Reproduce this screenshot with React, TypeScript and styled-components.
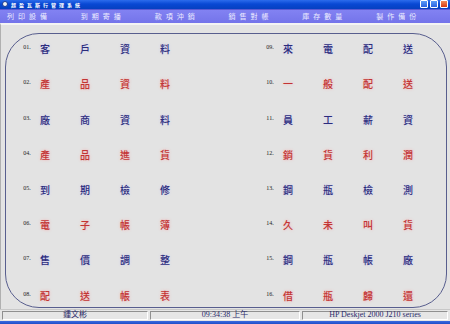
import styled, { createGlobalStyle } from 'styled-components'

const GlobalStyle = createGlobalStyle`
  html, body {
    margin: 0;
    padding: 0;
    background: #e3e3e3;
  }
  * {
    box-sizing: border-box;
  }
`

const cjk = `"Noto Sans CJK TC", "Noto Sans CJK SC", sans-serif`

const menus = ['列印設備', '到期寄播', '款項沖銷', '銷售對帳', '庫存數量', '製作備份']

const items = [
  '客戶資料',
  '產品資料',
  '廠商資料',
  '產品進貨',
  '到期檢修',
  '電子帳簿',
  '售價調整',
  '配送帳表',
  '來電配送',
  '一般配送',
  '員工薪資',
  '銷貨利潤',
  '鋼瓶檢測',
  '久未叫貨',
  '鋼瓶帳廠',
  '借瓶歸還',
]

const Window = styled.div`
  width: 450px;
  height: 324px;
  display: flex;
  flex-direction: column;
  background: #e3e3e3;
  overflow: hidden;
`

const TitleBar = styled.div`
  height: 10px;
  display: flex;
  align-items: center;
  padding: 0 2px;
  background: linear-gradient(#2c6cec, #0848d4 45%, #0640c0);
`

const AppIcon = styled.div`
  width: 6px;
  height: 6px;
  border-radius: 50%;
  background: #f4f4f4;
  border: 1px solid #1a3a90;
  margin-right: 3px;
`

const Title = styled.span`
  font-family: ${cjk};
  font-size: 5px;
  line-height: 1;
  color: #ffffff;
  letter-spacing: 3px;
  font-weight: 700;
  flex: 1;
`

const WinButton = styled.div<{ $close?: boolean }>`
  width: 8px;
  height: 8px;
  margin-left: 2px;
  border: 1px solid #ffffff;
  border-radius: 1px;
  background: ${(p) => (p.$close ? 'linear-gradient(#f08a5a, #d83a10)' : 'linear-gradient(#5a9af8, #2a62e0)')};
`

const MenuBar = styled.div`
  height: 17px;
  display: flex;
  align-items: center;
  padding-left: 7px;
  background: linear-gradient(#8282f2, #7474ea);
  border-top: 1px solid #5a5ad4;
`

const MenuItem = styled.div`
  width: 80px;
  font-family: ${cjk};
  font-size: 7px;
  line-height: 1;
  letter-spacing: 4px;
  color: #ececff;
`

const Client = styled.div`
  flex: 1;
  display: flex;
  flex-direction: column;
  border-top: 2px solid #f4f4f4;
  border-left: 1px solid #b0b0b0;
  padding: 8px 3px 1px 4px;
`

const Panel = styled.div`
  flex: 1;
  border: 1.5px solid #585e8e;
  border-radius: 34px;
  padding: 4px 0 0 16px;
  display: grid;
  grid-auto-flow: column;
  grid-template-columns: 243px 1fr;
  grid-template-rows: repeat(8, 22px);
  row-gap: 13.2px;
`

const Row = styled.div`
  display: flex;
  align-items: center;
`

const Num = styled.span`
  width: 10px;
  margin-right: 7px;
  font-family: 'Liberation Serif', serif;
  font-size: 6px;
  color: #222;
  text-align: center;
  transform: translateY(-2px);
`

const Char = styled.span<{ $red: boolean }>`
  width: 12px;
  margin-right: 28px;
  text-align: center;
  font-family: ${cjk};
  font-size: 10px;
  font-weight: 500;
  line-height: 1;
  color: ${(p) => (p.$red ? '#c23434' : '#2c2c7c')};
  text-shadow: ${(p) => (p.$red ? '0 0 3px #f4a8a8' : '0 0 3px #c8c8f0')};
`

const StatusBar = styled.div`
  height: 12px;
  display: flex;
  gap: 2px;
  padding: 1px 2px;
  background: #e6e6e6;
  border-top: 1px solid #c8c8c8;
`

const StatusPanel = styled.div<{ $w: number }>`
  width: ${(p) => p.$w}px;
  display: flex;
  align-items: center;
  justify-content: center;
  border-top: 1px solid #909090;
  border-left: 1px solid #909090;
  border-bottom: 1px solid #ffffff;
  border-right: 1px solid #ffffff;
  font-family: 'Liberation Serif', ${cjk};
  font-size: 8px;
  line-height: 1;
  color: #2a2a6a;
`

const BottomStrip = styled.div`
  height: 4px;
  background: linear-gradient(#3a6ae0, #1e4ec8);
`

export default function App() {
  return (
    <>
      <GlobalStyle />
      <Window>
        <TitleBar>
          <AppIcon />
          <Title>超盈瓦斯行管理系統</Title>
          <WinButton />
          <WinButton />
          <WinButton $close />
        </TitleBar>
        <MenuBar>
          {menus.map((m) => (
            <MenuItem key={m}>{m}</MenuItem>
          ))}
        </MenuBar>
        <Client>
          <Panel>
            {items.map((text, i) => (
              <Row key={i}>
                <Num>{String(i + 1).padStart(2, '0')}.</Num>
                {text.split('').map((c, j) => (
                  <Char key={j} $red={i % 2 === 1}>
                    {c}
                  </Char>
                ))}
              </Row>
            ))}
          </Panel>
        </Client>
        <StatusBar>
          <StatusPanel $w={146}>鍾文彬</StatusPanel>
          <StatusPanel $w={150}>09:34:38 上午</StatusPanel>
          <StatusPanel $w={146}>HP Deskjet 2000 J210 series</StatusPanel>
        </StatusBar>
        <BottomStrip />
      </Window>
    </>
  )
}
